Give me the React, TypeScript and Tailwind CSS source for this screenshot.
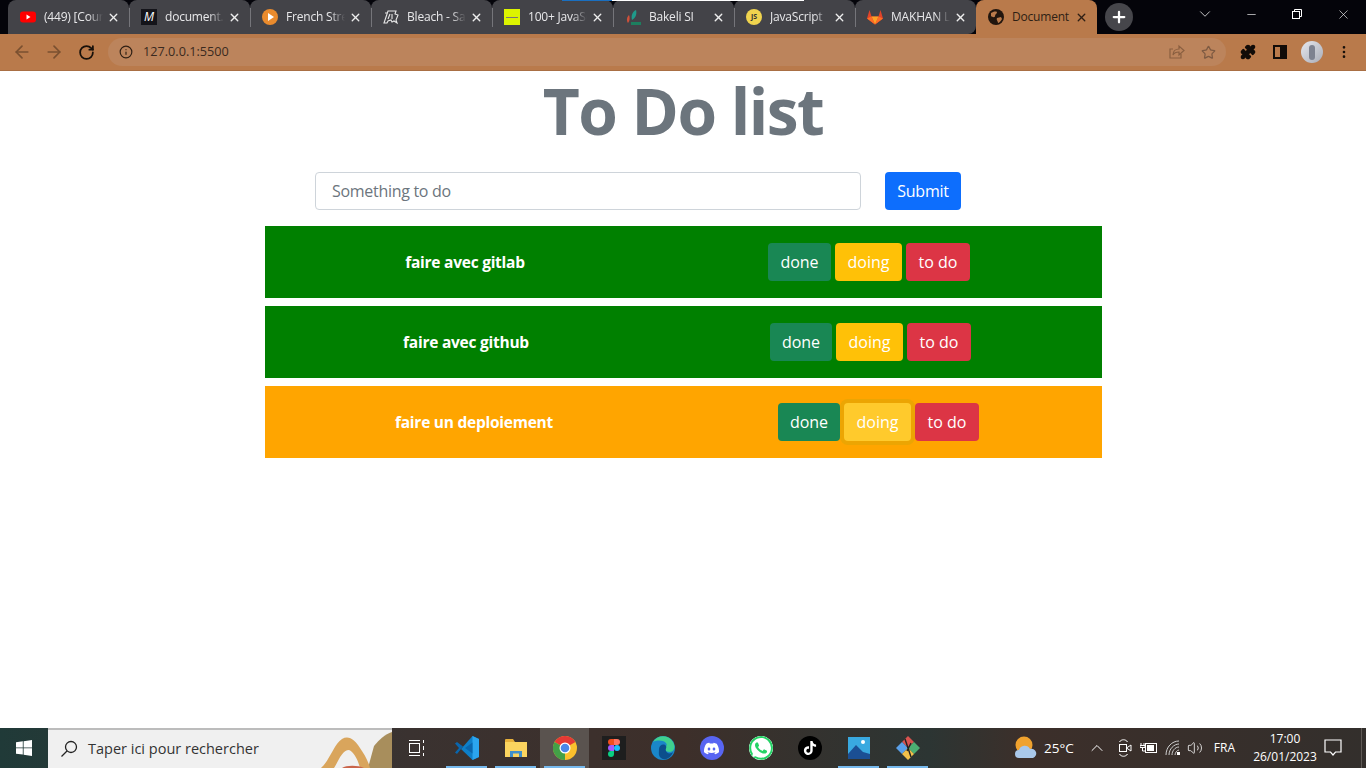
import React from "react";
import {
  ArrowLeft, ArrowRight, RotateCw, Info, Star, Puzzle, X, Plus, ChevronDown, Minus,
  ChevronUp, Volume2, EllipsisVertical,
} from "lucide-react";
import { SiDiscord, SiWhatsapp, SiTiktok } from "react-icons/si";

const font = { fontFamily: '"Open Sans","Noto Sans",sans-serif' };

const YouTube = () => (
  <svg width="16" height="16" viewBox="0 0 16 16"><rect y="2.5" width="16" height="11" rx="3" fill="#f00" /><path d="M6.500 5.500v5l4-2.500z" fill="#fff" /></svg>
);
const MediumM = () => (
  <div className="w-4 h-4 bg-[#14141a] flex items-center justify-center text-white text-[12px] italic font-normal leading-none">M</div>
);
const PlayFav = () => (
  <svg width="16" height="16" viewBox="0 0 16 16"><circle cx="8" cy="8" r="8" fill="#ea8b2d" /><path d="M6 4v8l6-4z" fill="#fff" /></svg>
);
const BleachFav = () => (
  <svg width="16" height="16" viewBox="0 0 16 16" fill="none" stroke="#e8e8e8" strokeWidth="1.100"><path d="M1 14 5 2h8l-1 3 3 1-2 5 1 3-3-2-2 1-1-2-3 1-1 2z" /><path d="M7 5l-2 5M9 5v5M4 4H2" /></svg>
);
const YellowFav = () => (
  <div className="w-4 h-4 bg-[#dcf400] flex items-center justify-center"><div className="w-3 h-[1px] bg-[#777]" /></div>
);
const BakeliFav = () => (
  <svg width="16" height="16" viewBox="0 0 16 16"><path d="M7 11C6 7 7 3 11 1c1 3 0 8-4 10z" fill="#1f9a8a" /><path d="M3 14C1 11 2 8 4 6c1 2 1 6-1 8z" fill="#d0503a" /><rect x="6" y="13" width="10" height="3" fill="#1d7f5f" /></svg>
);
const JsFav = () => (
  <div className="w-4 h-4 rounded-full bg-[#f0d44e] flex items-center justify-center text-[7px] font-bold text-[#333]">JS</div>
);
const GitlabFav = () => (
  <svg width="16" height="16" viewBox="0 0 16 16"><path d="M8 15.500 0 9.500 2.500 1l2 6.500h7L13.500 1 16 9.500z" fill="#e24329" /><path d="M8 15.500 4.500 7.500h7z" fill="#fca326" /><path d="M8 15.500 0 9.500l4.500-2zM8 15.500l8-6-4.500-2z" fill="#fc6d26" /></svg>
);
const Globe = () => (
  <svg width="16" height="16" viewBox="0 0 16 16"><circle cx="8" cy="8" r="8" fill="#22160e" /><path d="M3 4c2-1 4-2 6-1 0 2-2 2-2 4s-3 1-4 0zM9 9l4-1 1 2c-1 2-3 4-4 4 0-2-2-3-1-5z" fill="#b97a4b" /></svg>
);

const tabs: { title: string; icon: React.ReactNode }[] = [
  { title: "(449) [Cours", icon: <YouTube /> },
  { title: "document.", icon: <MediumM /> },
  { title: "French Strea", icon: <PlayFav /> },
  { title: "Bleach - Sai", icon: <BleachFav /> },
  { title: "100+ JavaSc", icon: <YellowFav /> },
  { title: "Bakeli SI", icon: <BakeliFav /> },
  { title: "JavaScript", icon: <JsFav /> },
  { title: "MAKHAN L", icon: <GitlabFav /> },
];

const Chrome = () => (
  <svg width="24" height="24" viewBox="0 0 24 24">
    <circle cx="12" cy="12" r="12" fill="#fbc02d" />
    <path d="M12 12 1.600 6A12 12 0 0 1 22.400 6z" fill="#e53935" />
    <path d="M12 12 1.600 6A12 12 0 0 0 12 24z" fill="#43a047" />
    <circle cx="12" cy="12" r="5.500" fill="#fff" />
    <circle cx="12" cy="12" r="4.300" fill="#4a86e8" />
  </svg>
);
const VsCode = () => (
  <svg width="24" height="26" viewBox="0 0 24 24">
    <path d="M17.500 0 24 3v18l-6.500 3L6 13l11.500-13z" fill="#0e7fc8" />
    <path d="M17.500 0 24 3v18l-6.500 3V0z" fill="#2ba5ee" />
    <path d="M17.500 6.500v11L10 12zM0 7.500 2 6l6 4.500L6 13l-4 5-2-1.500 4-4.500z" fill="#0a66ad" />
  </svg>
);
const Folder = () => (
  <svg width="22" height="20" viewBox="0 0 22 20">
    <path d="M0 2a1 1 0 0 1 1-1h7l2 3H0z" fill="#e8b13a" />
    <rect y="4" width="22" height="15" fill="#fbd45f" />
    <rect x="5" y="13" width="12" height="6" fill="#3f8fc9" />
    <rect x="8" y="15.500" width="6" height="3.500" fill="#fbd45f" />
  </svg>
);
const Figma = () => (
  <div className="w-6 h-6 bg-[#1e1e1e] flex items-center justify-center">
    <svg width="12" height="18" viewBox="0 0 12 18">
      <path d="M6 0H3a3 3 0 0 0 0 6h3z" fill="#f24e1e" />
      <path d="M6 0h3a3 3 0 0 1 0 6H6z" fill="#ff7262" />
      <path d="M6 6H3a3 3 0 0 0 0 6h3z" fill="#a259ff" />
      <circle cx="9" cy="9" r="3" fill="#1abcfe" />
      <path d="M6 12H3a3 3 0 1 0 3 3z" fill="#0acf83" />
    </svg>
  </div>
);
const Edge = () => (
  <svg width="24" height="24" viewBox="0 0 24 24">
    <circle cx="12" cy="12" r="12" fill="#1a86c8" />
    <path d="M2 6c4-7 15-8 20 0 3 5 1 10-3 10-3 0-5-1-5-3 0-3 3-3 1-6-3-3-9-3-13-1z" fill="#3fd08f" />
    <path d="M8 13c0-4 5-6 7-3 1 2-1 3 0 5 1 3 5 3 7 1-2 6-8 9-12 6-3-2-2-6-2-9z" fill="#0c4f8c" />
  </svg>
);
const Photos = () => (
  <svg width="22" height="22" viewBox="0 0 22 22">
    <rect width="22" height="22" fill="#39a9e0" />
    <circle cx="15" cy="5" r="2" fill="#fff" />
    <path d="M0 17 8 8l7 7 7 2v5H0z" fill="#1b4f94" />
  </svg>
);
const GitKraken = () => (
  <svg width="24" height="24" viewBox="0 0 24 24">
    <path d="M12 0 18 6 12 12 6 6z" fill="#d9534f" />
    <path d="M6 6 12 12 6 18 0 12z" fill="#5aa0e8" />
    <path d="M18 6 24 12 18 18 12 12z" fill="#4caf72" />
    <path d="M12 12 18 18 12 24 6 18z" fill="#f3c14b" />
    <path d="M9 3 15 21M15 7l-4 8" stroke="#222" strokeWidth="1.400" fill="none" />
  </svg>
);
const WinLogo = () => (
  <svg width="16" height="16" viewBox="0 0 16 16" fill="#fff">
    <path d="M0 2.300 6.800 1.300v6.200H0zM7.600 1.200 16 0v7.500H7.600zM0 8.300h6.800v6.300L0 13.700zM7.600 8.300H16V16l-8.400-1.200z" />
  </svg>
);
const Arch = () => (
  <svg width="78" height="40" viewBox="0 0 78 40">
    <path d="M54 40 60 18c5-6 11-12 18-14v36z" fill="#a88e5c" />
    <path d="M7 40C16 32 20 16 28 11c7-4 13 1 18 9 4 6 8 12 10 20H46C44 32 40 24 35 22 28 22 24 34 20 40z" fill="#d9a55c" />
    <path d="M28 40c4-3 16-3 22 0z" fill="#c9644a" />
  </svg>
);
const Weather = () => (
  <svg width="24" height="24" viewBox="0 0 24 24">
    <circle cx="10" cy="9" r="8.500" fill="#f0a22e" />
    <path d="M5 22a4 4 0 0 1 0-8 6 6 0 0 1 11-1 4.500 4.500 0 0 1 3 9z" fill="#a9c8ea" />
  </svg>
);
const Meet = () => (
  <svg width="16" height="20" viewBox="0 0 16 20" fill="none" stroke="#fff" strokeWidth="1">
    <path d="M2.500 4C4 1 9 1 10.500 4M2.500 16C4 19 9 19 10.500 16" />
    <rect x="2.500" y="6.500" width="7" height="7" />
    <path d="M9.500 10l4.500-3v6z" />
  </svg>
);
const Battery = () => (
  <svg width="18" height="14" viewBox="0 0 18 14" fill="none" stroke="#fff" strokeWidth="1">
    <path d="M1 2v2M4 2v2M0 4.500h5v2H0zM2.500 6.500V10h3" />
    <rect x="5.500" y="2.500" width="11" height="9" />
    <rect x="7" y="4" width="7" height="6" fill="#fff" stroke="none" />
  </svg>
);
const WifiFan = () => (
  <svg width="16" height="16" viewBox="0 0 16 16" fill="none" stroke="#cfcfcf" strokeWidth="1">
    <path d="M1 15C1 7 7 1 14 1M4 15C4 9 9 4 14 4M7 15c0-4 3-8 7-8" />
    <path d="M10 15c0-2 2-5 4-5" />
    <rect x="12" y="12" width="3" height="3" fill="#fff" stroke="none" />
  </svg>
);
const Bubble = () => (
  <svg width="20" height="20" viewBox="0 0 20 20" fill="none" stroke="#fff" strokeWidth="1.200">
    <path d="M1 2h16v12h-5.500L9 17l-2.500-3H1z" />
  </svg>
);
const ShareBox = () => (
  <svg width="16" height="16" viewBox="0 0 16 16" fill="none" stroke="#8a5f40" strokeWidth="1.200">
    <path d="M12 10v4H1V5h3" />
    <path d="M4 11c0-4 3-6 6-6V2l5 4.500-5 4.500V8c-3 0-5 1-6 3z" />
  </svg>
);

const ChromeIcon = ({ children, className }: { children: React.ReactNode; className: string }) => (
  <div className={`flex items-center justify-center ${className}`}>{children}</div>
);

const rows = [
  { label: "faire avec gitlab", rowColor: "bg-[#008000]", labelW: "w-[400px]", groupMl: "ml-[103px]", doneW: "w-[63px]", focus: false },
  { label: "faire avec github", rowColor: "bg-[#008000]", labelW: "w-[402px]", groupMl: "ml-[103px]", doneW: "w-[62px]", focus: false },
  { label: "faire un deploiement", rowColor: "bg-[#ffa500]", labelW: "w-[418px]", groupMl: "ml-[95px]", doneW: "w-[62px]", focus: true },
];

const slots: { node: React.ReactNode; bar?: string; active?: boolean }[] = [
  { node: <VsCode />, bar: "bg-[#76b9ed]" },
  { node: <Folder />, bar: "bg-[#76b9ed]" },
  { node: <Chrome />, bar: "bg-[#76b9ed]", active: true },
  { node: <Figma /> },
  { node: <Edge /> },
  { node: <div className="w-6 h-6 rounded-full bg-[#5865f2] flex items-center justify-center"><SiDiscord size={15} color="#fff" /></div> },
  { node: <div className="w-6 h-6 rounded-full bg-[#25d366] flex items-center justify-center"><SiWhatsapp size={24} color="#25d366" className="bg-white rounded-full" /></div> },
  { node: <div className="w-6 h-6 rounded-full bg-black flex items-center justify-center"><SiTiktok size={14} color="#fff" /></div> },
  { node: <Photos />, bar: "bg-[#76b9ed]" },
  { node: <GitKraken />, bar: "bg-[#76b9ed]" },
];

export default function App() {
  return (
    <div className="relative w-[1366px] h-[768px] flex flex-col overflow-hidden bg-white" style={font}>
      {/* tab strip */}
      <div className="relative h-[34px] bg-[#04040a] flex pl-2 shrink-0">
        <div className="absolute top-0 left-[562px] w-[50px] h-[1px] bg-[#1a6fc0] z-10" />
        <div className="absolute top-0 left-[612px] w-[192px] h-[1px] bg-white z-10" />
        {tabs.map((t, i) => (
          <div key={i} className={`relative w-[121px] h-[34px] bg-[#434348] flex items-center pl-3 rounded-t-lg ${i === 7 ? "rounded-br-lg" : ""}`}>
            <div className="w-4 h-4 shrink-0">{t.icon}</div>
            <div className="ml-2 w-[59px] overflow-hidden whitespace-nowrap text-[12px] tracking-[-0.2px] text-[#e8e8ea] [mask-image:linear-gradient(to_right,black_75%,transparent)]">{t.title}</div>
            <X size={13} strokeWidth={2.5} color="#eeeeee" className="ml-[4px] shrink-0" />
            {i < 7 && <div className="absolute right-[-1px] top-[8px] w-[1px] h-[19px] bg-[#75757a] z-10" />}
          </div>
        ))}
        <div className="w-[121px] h-[34px] bg-[#b97a4b] rounded-t-lg flex items-center pl-3">
          <Globe />
          <div className="ml-2 w-[59px] whitespace-nowrap overflow-hidden text-[12px] tracking-[-0.2px] text-[#2e1f14]">Document</div>
          <X size={13} strokeWidth={2.5} color="#2e1f14" className="ml-[4px]" />
        </div>
        <div className="ml-2 w-7 h-7 mt-[3px] rounded-full bg-[#46464b] flex items-center justify-center">
          <Plus size={18} strokeWidth={3} color="#fff" />
        </div>
        <div className="absolute right-0 top-0 h-7 flex items-center text-white">
          <ChromeIcon className="w-[46px]"><ChevronDown size={18} strokeWidth={1} /></ChromeIcon>
          <ChromeIcon className="w-[46px]"><Minus size={13} strokeWidth={1.2} /></ChromeIcon>
          <ChromeIcon className="w-[46px]">
            <svg width="10" height="10" viewBox="0 0 10 10" fill="none" stroke="#fff"><path d="M2.500 2.500V.5h7v7h-2" /><rect x=".5" y="2.500" width="7" height="7" /></svg>
          </ChromeIcon>
          <ChromeIcon className="w-[46px]"><X size={15} strokeWidth={1} /></ChromeIcon>
        </div>
      </div>
      {/* toolbar */}
      <div className="h-[37px] shrink-0 bg-[#b97a4b] border-b border-[#a96f44] flex items-center">
        <ChromeIcon className="w-8 ml-[6px]"><ArrowLeft size={20} color="#7a5030" /></ChromeIcon>
        <ChromeIcon className="w-8"><ArrowRight size={20} color="#7a5030" /></ChromeIcon>
        <ChromeIcon className="w-8"><RotateCw size={17} strokeWidth={2.5} color="#17100a" /></ChromeIcon>
        <div className="ml-[6px] w-[1118px] h-7 rounded-full bg-[#bc845c] flex items-center">
          <Info size={14} color="#2e1f14" className="ml-[11px]" />
          <span className="ml-[10px] text-[12.700px] text-[#3a2a20]">127.0.0.1:5500</span>
          <div className="ml-auto"><ShareBox /></div>
          <Star size={15} color="#7d5a42" className="ml-[16px] mr-[10px]" />
        </div>
        <ChromeIcon className="w-8 ml-[6px]"><Puzzle size={16} fill="#120c08" color="#120c08" /></ChromeIcon>
        <ChromeIcon className="w-8">
          <div className="w-[14px] h-[14px] border-2 border-[#120c08] flex justify-end"><div className="w-[5px] h-full bg-[#120c08]" /></div>
        </ChromeIcon>
        <ChromeIcon className="w-8">
          <div className="w-[22px] h-[22px] rounded-full bg-[linear-gradient(135deg,#e6e8ee,#a9adb8)] flex items-center justify-center"><div className="w-[6px] h-[15px] rounded-full bg-[#7d8290]" /></div>
        </ChromeIcon>
        <ChromeIcon className="w-8"><EllipsisVertical size={16} color="#17100a" /></ChromeIcon>
      </div>
      {/* page */}
      <div className="flex-1 bg-white">
        <h1 className="text-center text-[64px] leading-[77px] font-bold text-[#6c757d] mt-[1px] tracking-[-1.5px]">To Do list</h1>
        <div className="ml-[265px] w-[837px] mt-[23px]">
          <div className="flex pl-[50px]">
            <input readOnly placeholder="Something to do" className="w-[546px] h-[38px] border border-[#ced4da] rounded-[4px] px-[16px] text-[16px] tracking-[-0.3px] placeholder:text-[#6c757d] outline-none" />
            <button className="ml-6 w-[76px] h-[38px] rounded-[4px] bg-[#0d6efd] text-white text-[16px] tracking-[-0.2px]">Submit</button>
          </div>
          <div className="mt-4 flex flex-col gap-2">
            {rows.map((r) => (
              <div key={r.label} className={`h-[72px] flex items-center ${r.rowColor}`}>
                <div className={`pt-[2px] text-center text-white font-bold text-[15.500px] tracking-[-0.25px] ${r.labelW}`}>{r.label}</div>
                <div className={`flex gap-1 ${r.groupMl}`}>
                  <button className={`h-[38px] rounded-[4px] bg-[#198754] text-white text-[16px] ${r.doneW}`}>done</button>
                  <button className={`w-[67px] h-[38px] rounded-[4px] text-white text-[16px] ${r.focus ? "bg-[#ffca2c] ring-4 ring-[#eca503]" : "bg-[#ffc107]"}`}>doing</button>
                  <button className="w-[64px] h-[38px] rounded-[4px] bg-[#dc3545] text-white text-[16px]">to do</button>
                </div>
              </div>
            ))}
          </div>
        </div>
      </div>
      {/* taskbar */}
      <div className="h-10 shrink-0 flex items-center bg-[linear-gradient(90deg,#203a38_0%,#3a3230_30%,#3d2f2a_50%,#2c3533_68%,#3c2f2a_75%,#332f2c_100%)]">
        <div className="w-12 h-10 flex items-center justify-center"><WinLogo /></div>
        <div className="relative w-[344px] h-10 bg-[#f0f0f0] border-t-2 border-[#bcbcbc] flex items-center overflow-hidden">
          <svg width="18" height="18" viewBox="0 0 18 18" fill="none" stroke="#222" strokeWidth="1.300" className="ml-[12px]">
            <circle cx="11" cy="7" r="5.500" /><path d="M7 11 1.500 16.500" />
          </svg>
          <span className="ml-[10px] text-[14.500px] text-[#333]">Taper ici pour rechercher</span>
          <div className="absolute right-0 bottom-0 h-10"><Arch /></div>
        </div>
        <div className="w-[50px] flex items-center justify-center">
          <svg width="18" height="18" viewBox="0 0 18 18" fill="none" stroke="#fff"><rect x="1.500" y="4.500" width="10" height="9" /><path d="M1 1.500h11M1 16.500h11M15.500 1v3M15.500 7v4M15.500 14v3" /></svg>
        </div>
        {slots.map((s, i) => (
          <div key={i} className={`relative w-[49px] h-10 flex items-center justify-center ${s.active ? "bg-[#5a534f]" : ""}`}>
            {s.node}
            {s.bar && <div className={`absolute bottom-0 left-[4px] right-[4px] h-[2px] ${s.bar}`} />}
          </div>
        ))}
        <div className="relative ml-auto flex items-center text-white h-10">
          <Weather />
          <span className="ml-[6px] text-[13.500px]">25°C</span>
          <ChevronUp size={20} strokeWidth={1.2} className="ml-[13px]" />
          <div className="ml-[10px]"><Meet /></div>
          <div className="ml-[7px]"><Battery /></div>
          <div className="ml-[7px]"><WifiFan /></div>
          <Volume2 size={16} strokeWidth={1.2} className="ml-[6px]" />
          <span className="ml-[11px] text-[12px]">FRA</span>
          <div className="ml-[13px] w-[74px] text-center text-[12px] leading-[18px]">
            <div>17:00</div>
            <div>26/01/2023</div>
          </div>
          <div className="w-[44px] flex items-center pl-[2px]"><Bubble /></div>
          <div className="absolute right-[4px] top-0 bottom-0 w-[1px] bg-[#5f5a56]" />
        </div>
      </div>
    </div>
  );
}
